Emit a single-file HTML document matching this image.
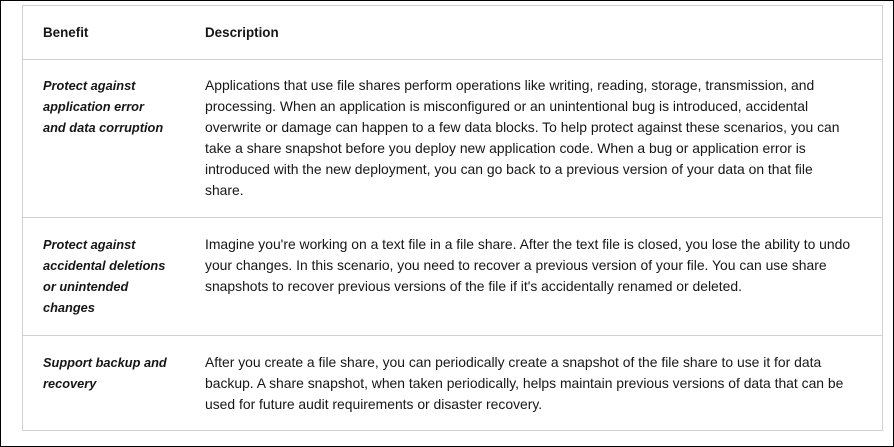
<!DOCTYPE html>
<html><head><style>
html,body{margin:0;padding:0}
body{width:894px;height:447px;box-sizing:border-box;border:1px solid #000;background:#fff;position:relative;font-family:"Liberation Sans",sans-serif;font-size:13.9px;color:#161616;overflow:hidden}
.t{position:absolute;left:21px;top:4px;width:861px;height:426px;box-sizing:border-box;border:1px solid #d1d1d1}
.h{position:absolute;left:0;width:100%;border-top:1px solid #d1d1d1}
.c{position:absolute;line-height:21px;white-space:nowrap}
.b{font-weight:bold;font-size:13.4px}
.i{font-style:italic;font-weight:bold;font-size:12.8px}
</style></head><body>
<div class="t">
<div class="h" style="top:53px"></div>
<div class="h" style="top:211px"></div>
<div class="h" style="top:329px"></div>
<div class="c b" style="left:20px;top:16px">Benefit</div>
<div class="c b" style="left:182px;top:16px">Description</div>
<div class="c i" style="left:20px;top:69px">Protect against<br>application error<br>and data corruption</div>
<div class="c" style="left:182px;top:69px">Applications that use file shares perform operations like writing, reading, storage, transmission, and<br>processing. When an application is misconfigured or an unintentional bug is introduced, accidental<br>overwrite or damage can happen to a few data blocks. To help protect against these scenarios, you can<br>take a share snapshot before you deploy new application code. When a bug or application error is<br>introduced with the new deployment, you can go back to a previous version of your data on that file<br>share.</div>
<div class="c i" style="left:20px;top:228px">Protect against<br>accidental deletions<br>or unintended<br>changes</div>
<div class="c" style="left:182px;top:228px">Imagine you're working on a text file in a file share. After the text file is closed, you lose the ability to undo<br>your changes. In this scenario, you need to recover a previous version of your file. You can use share<br>snapshots to recover previous versions of the file if it's accidentally renamed or deleted.</div>
<div class="c i" style="left:20px;top:346px">Support backup and<br>recovery</div>
<div class="c" style="left:182px;top:346px">After you create a file share, you can periodically create a snapshot of the file share to use it for data<br>backup. A share snapshot, when taken periodically, helps maintain previous versions of data that can be<br>used for future audit requirements or disaster recovery.</div>
</div>
</body></html>
